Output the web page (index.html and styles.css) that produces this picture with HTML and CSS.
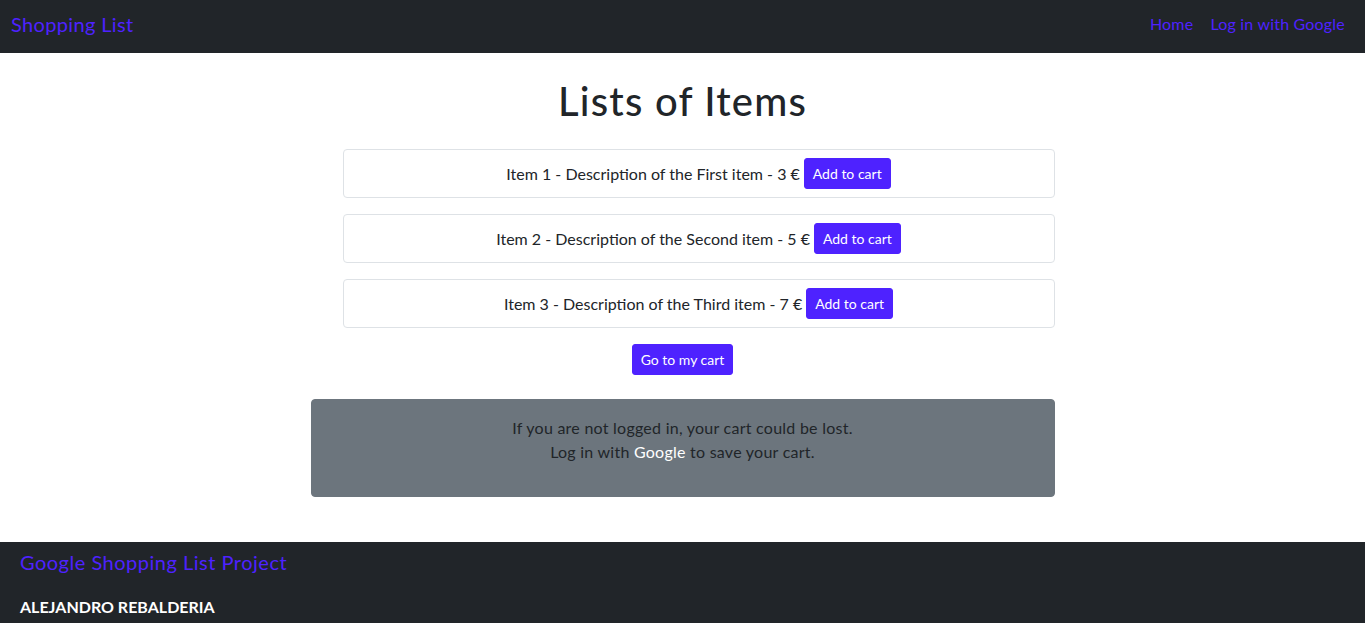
FILE: index.html
```html
<!DOCTYPE html>
<html lang="en">
<head>
<meta charset="utf-8">
<title>Shopping List</title>
<link rel="stylesheet" href="styles.css">
</head>
<body>
<nav class="navbar">
  <a class="brand" href="#">Shopping List</a>
  <div class="nav-links">
    <a class="nav-link" href="#">Home</a>
    <a class="nav-link" href="#">Log in with Google</a>
  </div>
</nav>
<main class="main">
  <h1 class="title">Lists of Items</h1>
  <ul class="items">
    <li class="item"><span>Item 1 - Description of the First item - 3 €</span><button class="btn">Add to cart</button></li>
    <li class="item"><span>Item 2 - Description of the Second item - 5 €</span><button class="btn">Add to cart</button></li>
    <li class="item"><span>Item 3 - Description of the Third item - 7 €</span><button class="btn">Add to cart</button></li>
  </ul>
  <div class="cart-row"><button class="btn">Go to my cart</button></div>
  <div class="alert">
    <p>If you are not logged in, your cart could be lost.<br>Log in with <a class="alert-link" href="#">Google</a> to save your cart.</p>
  </div>
</main>
<footer class="footer">
  <a class="footer-title" href="#">Google Shopping List Project</a>
  <div class="author">ALEJANDRO REBALDERIA</div>
</footer>
</body>
</html>
```
FILE: styles.css
```css
* { box-sizing: border-box; }
html, body { margin: 0; padding: 0; }
body {
  font-family: "Lato", "Noto Sans", sans-serif;
  font-size: 16px;
  line-height: 1.5;
  color: #212529;
  background: #fff;
}
a { text-decoration: none; color: #4e22ff; }
.navbar {
  background: #212529;
  height: 53px;
  display: flex;
  align-items: flex-start;
  justify-content: space-between;
  padding: 9px 12px 0 11px;
}
.brand { font-size: 20px; line-height: 30px; letter-spacing: 0.35px; }
.nav-links { display: flex; padding-top: 3px; }
.nav-link { padding: 0 8px; line-height: 24px; letter-spacing: 0.2px; }
.nav-link + .nav-link { margin-left: 1px; }
.main {
  width: 744px;
  margin: 0 auto;
  padding-bottom: 45px;
}
.title {
  margin: 24px 0 24px;
  font-size: 40px;
  font-weight: 500;
  line-height: 48px;
  letter-spacing: 1.2px;
  text-align: center;
}
.items { list-style: none; margin: 0; padding: 0 0 0 32px; }
.item {
  border: 1px solid #dee2e6;
  border-radius: 4px;
  padding: 8px;
  margin-bottom: 16px;
  display: flex;
  justify-content: center;
  align-items: center;
  gap: 4px;
}
.btn {
  font-family: inherit;
  font-size: 14px;
  line-height: 21px;
  padding: 4px 8px;
  border: 1px solid #4e22ff;
  background: #4e22ff;
  color: #fff;
  border-radius: 3px;
}
.cart-row { text-align: center; margin-bottom: 24px; }
.cart-row .btn { vertical-align: top; }
.alert {
  background: #6c757d;
  border: 1px solid #6c757d;
  border-radius: 4px;
  padding: 16px;
  text-align: center;
  color: #212529;
  letter-spacing: 0.25px;
}
.alert p { margin: 0 0 16px; }
.alert-link { color: #fff; }
.footer {
  background: #212529;
  padding: 5px 20px 20px;
}
.footer-title { display: block; font-size: 20px; line-height: 30px; letter-spacing: 0.5px; }
.author { color: #fff; font-weight: 700; margin-top: 18px; }
```
